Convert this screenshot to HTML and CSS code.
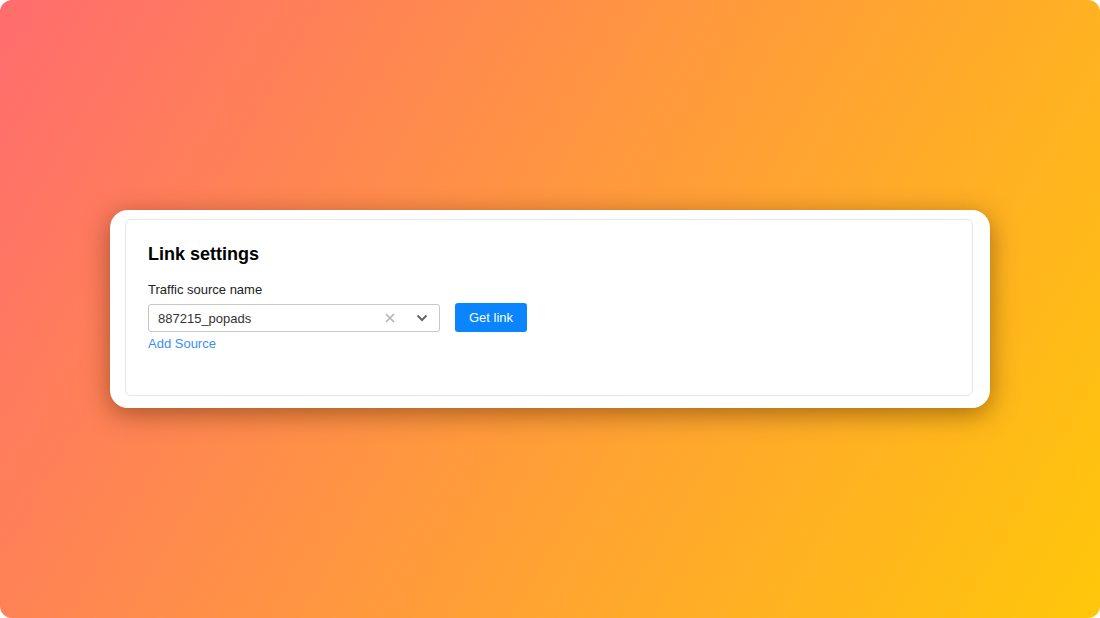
FILE: index.html
```html
<!DOCTYPE html>
<html lang="en">
<head>
    <meta charset="UTF-8">
    <meta name="viewport" content="width=device-width, initial-scale=1.0">
    <title>Link settings</title>
    <link rel="stylesheet" href="styles.css">
</head>
<body>
    <div class="backdrop">
        <div class="card">
            <div class="panel">
                <h2 class="panel-title">Link settings</h2>
                <label class="field-label">Traffic source name</label>
                <div class="field-row">
                    <div class="select">
                        <span class="select-value">887215_popads</span>
                        <span class="select-clear">
                            <svg width="10" height="10" viewBox="0 0 10 10"><path d="M1 1L9 9M9 1L1 9" stroke="#b3b3b3" stroke-width="1.6"/></svg>
                        </span>
                        <span class="select-arrow">
                            <svg width="12" height="8" viewBox="0 0 12 8"><path d="M1.5 1.5L6 6L10.5 1.5" fill="none" stroke="#666" stroke-width="2"/></svg>
                        </span>
                    </div>
                    <button class="btn">Get link</button>
                </div>
                <a href="#" class="add-link">Add Source</a>
            </div>
        </div>
    </div>
</body>
</html>
```

FILE: styles.css
```css
html, body {
    margin: 0;
    padding: 0;
    background: #fff;
}
body {
    font-family: "Liberation Sans", Arial, sans-serif;
    width: 1100px;
    height: 618px;
    overflow: hidden;
}
.backdrop {
    width: 1100px;
    height: 618px;
    border-radius: 12px;
    background: linear-gradient(120deg, #ff6c6e 0%, #ff9a3c 50%, #ffc70a 100%);
    display: flex;
    align-items: center;
    justify-content: center;
}
.card {
    width: 880px;
    height: 198px;
    box-sizing: border-box;
    background: #fff;
    border-radius: 18px;
    padding: 9px 17px 12px 15px;
    box-shadow: 0 6px 26px rgba(80, 35, 0, 0.5);
}
.panel {
    height: 100%;
    box-sizing: border-box;
    border: 1px solid #e6e6e6;
    border-radius: 6px;
    padding: 22px 22px 0 22px;
}
.panel-title {
    margin: 0 0 16px 0;
    font-size: 18px;
    font-weight: bold;
    color: #000;
    line-height: 24px;
}
.field-label {
    display: block;
    font-size: 13px;
    color: #222;
    line-height: 16px;
    margin-bottom: 6px;
}
.field-row {
    display: flex;
    align-items: flex-start;
    gap: 15px;
}
.select {
    width: 292px;
    height: 28px;
    box-sizing: border-box;
    border: 1px solid #c8c8c8;
    border-radius: 3px;
    display: flex;
    align-items: center;
    padding-left: 9px;
}
.select-value {
    flex: 1;
    font-size: 13px;
    color: #333;
}
.select-clear {
    display: flex;
    width: 10px;
    margin-right: 21px;
}
.select-arrow {
    display: flex;
    width: 12px;
    margin-right: 11px;
}
.btn {
    background: #0a84ff;
    color: #fff;
    border: none;
    border-radius: 3px;
    height: 29px;
    width: 72px;
    margin-top: -1px;
    font-family: inherit;
    font-size: 13px;
    padding: 0;
    cursor: pointer;
}
.add-link {
    display: inline-block;
    margin-top: 4px;
    font-size: 13px;
    color: #3a8ef5;
    text-decoration: none;
    line-height: 16px;
}
```
